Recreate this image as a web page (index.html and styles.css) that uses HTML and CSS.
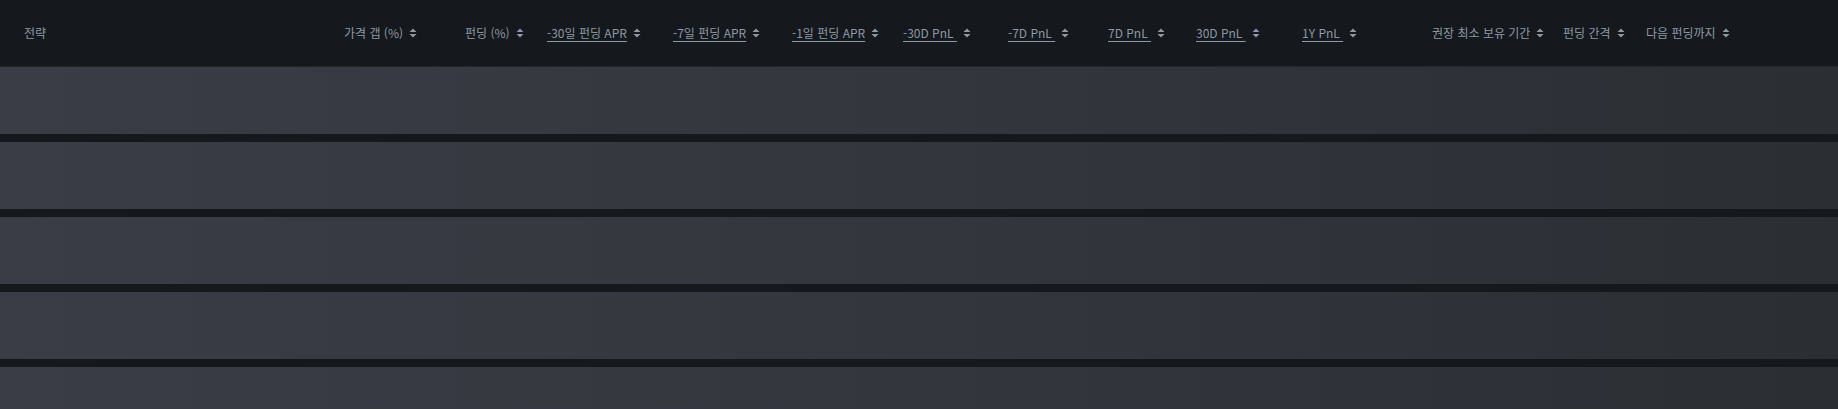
FILE: index.html
```html
<!DOCTYPE html>
<html lang="ko">
<head>
<meta charset="utf-8">
<link rel="stylesheet" href="styles.css">
</head>
<body>
<div class="table">
  <div class="thead">
    <div class="th">전략</div>
    <div class="th">가격 갭 (%)<svg class="sort" viewBox="0 0 8 10"><path d="M4 0.5 L7.5 4 H0.5Z M4 9.5 L7.5 6 H0.5Z"/></svg></div>
    <div class="th">펀딩 (%)<svg class="sort" viewBox="0 0 8 10"><path d="M4 0.5 L7.5 4 H0.5Z M4 9.5 L7.5 6 H0.5Z"/></svg></div>
    <div class="th"><span class="u">-30일 펀딩 APR</span><svg class="sort" viewBox="0 0 8 10"><path d="M4 0.5 L7.5 4 H0.5Z M4 9.5 L7.5 6 H0.5Z"/></svg></div>
    <div class="th"><span class="u">-7일 펀딩 APR</span><svg class="sort" viewBox="0 0 8 10"><path d="M4 0.5 L7.5 4 H0.5Z M4 9.5 L7.5 6 H0.5Z"/></svg></div>
    <div class="th"><span class="u">-1일 펀딩 APR</span><svg class="sort" viewBox="0 0 8 10"><path d="M4 0.5 L7.5 4 H0.5Z M4 9.5 L7.5 6 H0.5Z"/></svg></div>
    <div class="th"><span class="u">-30D PnL&nbsp;</span><svg class="sort" viewBox="0 0 8 10"><path d="M4 0.5 L7.5 4 H0.5Z M4 9.5 L7.5 6 H0.5Z"/></svg></div>
    <div class="th"><span class="u">-7D PnL&nbsp;</span><svg class="sort" viewBox="0 0 8 10"><path d="M4 0.5 L7.5 4 H0.5Z M4 9.5 L7.5 6 H0.5Z"/></svg></div>
    <div class="th"><span class="u">7D PnL&nbsp;</span><svg class="sort" viewBox="0 0 8 10"><path d="M4 0.5 L7.5 4 H0.5Z M4 9.5 L7.5 6 H0.5Z"/></svg></div>
    <div class="th"><span class="u">30D PnL&nbsp;</span><svg class="sort" viewBox="0 0 8 10"><path d="M4 0.5 L7.5 4 H0.5Z M4 9.5 L7.5 6 H0.5Z"/></svg></div>
    <div class="th"><span class="u">1Y PnL&nbsp;</span><svg class="sort" viewBox="0 0 8 10"><path d="M4 0.5 L7.5 4 H0.5Z M4 9.5 L7.5 6 H0.5Z"/></svg></div>
    <div class="th">권장 최소 보유 기간<svg class="sort" viewBox="0 0 8 10"><path d="M4 0.5 L7.5 4 H0.5Z M4 9.5 L7.5 6 H0.5Z"/></svg></div>
    <div class="th">펀딩 간격<svg class="sort" viewBox="0 0 8 10"><path d="M4 0.5 L7.5 4 H0.5Z M4 9.5 L7.5 6 H0.5Z"/></svg></div>
    <div class="th">다음 펀딩까지<svg class="sort" viewBox="0 0 8 10"><path d="M4 0.5 L7.5 4 H0.5Z M4 9.5 L7.5 6 H0.5Z"/></svg></div>
  </div>
  <div class="tbody">
    <div class="row"></div>
    <div class="row"></div>
    <div class="row"></div>
    <div class="row"></div>
    <div class="row"></div>
  </div>
</div>
</body>
</html>
```
FILE: styles.css
```css
html, body {
  margin: 0;
  padding: 0;
  background: #15181d;
  overflow: hidden;
}
body {
  font-family: "Noto Sans CJK KR", "Noto Sans", sans-serif;
  font-size: 12px;
  color: #8c98a5;
}
.table {
  width: 1838px;
}
.thead {
  display: grid;
  grid-template-columns: 320px 121px 82px 126px 119px 111px 105px 100px 88px 106px 130px 131px 83px 1fr;
  align-items: center;
  height: 66px;
  padding-left: 24px;
  border-bottom: 1px solid #23262c;
  box-sizing: content-box;
}
.th {
  display: flex;
  align-items: center;
  gap: 6px;
  white-space: nowrap;
  line-height: 16px;
}
.u {
  text-decoration: underline;
  text-underline-offset: 3px;
  text-decoration-thickness: 1px;
  text-decoration-color: #8c98a5;
}
.sort {
  width: 8px;
  height: 10px;
  fill: #8c98a5;
  flex: none;
}
.tbody {
  display: flex;
  flex-direction: column;
  gap: 8px;
}
.row {
  height: 67px;
  background: linear-gradient(to right, #3a3d45 0%, #33363d 50%, #2b2e33 100%);
}
```
